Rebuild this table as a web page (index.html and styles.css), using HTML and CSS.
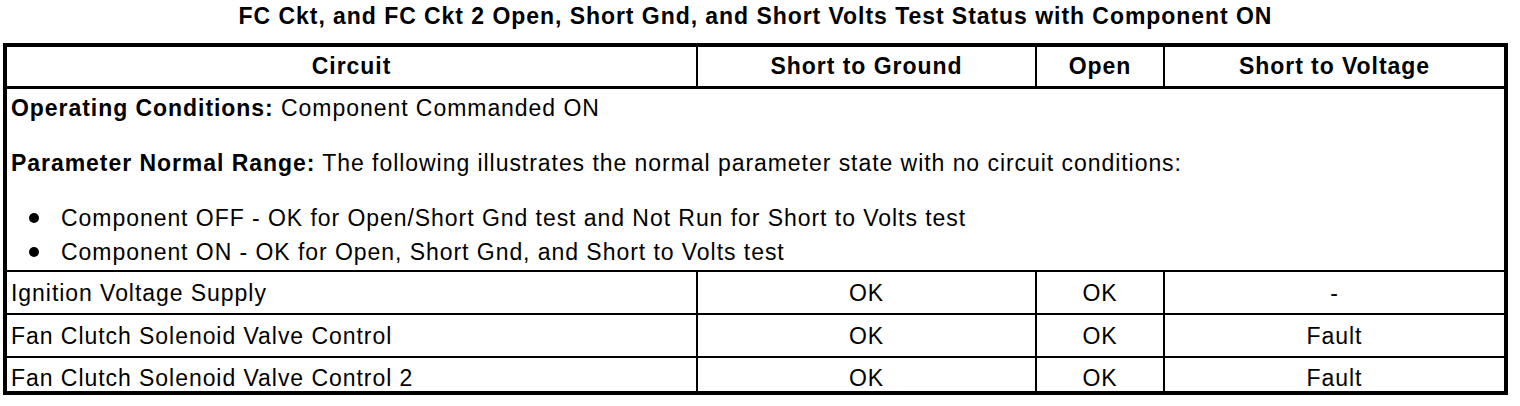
FILE: index.html
```html
<!DOCTYPE html>
<html lang="en">
<head>
<meta charset="utf-8">
<title>FC Ckt Test Status</title>
<link rel="stylesheet" href="styles.css">
</head>
<body>
<h1 class="title">FC Ckt, and FC Ckt 2 Open, Short Gnd, and Short Volts Test Status with Component ON</h1>
<table class="status">
  <colgroup>
    <col class="c-circuit">
    <col class="c-ground">
    <col class="c-open">
    <col class="c-volt">
  </colgroup>
  <thead>
    <tr>
      <th class="h-first">Circuit</th>
      <th>Short to Ground</th>
      <th>Open</th>
      <th class="h-last">Short to Voltage</th>
    </tr>
  </thead>
  <tbody>
    <tr>
      <td class="info" colspan="4">
        <p class="para"><b>Operating Conditions:</b> Component Commanded ON</p>
        <p class="para"><b>Parameter Normal Range:</b> The following illustrates the normal parameter state with no circuit conditions:</p>
        <ul class="bullets">
          <li>Component OFF - OK for Open/Short Gnd test and Not Run for Short to Volts test</li>
          <li>Component ON - OK for Open, Short Gnd, and Short to Volts test</li>
        </ul>
      </td>
    </tr>
    <tr class="row">
      <td class="name">Ignition Voltage Supply</td>
      <td class="val">OK</td>
      <td class="val">OK</td>
      <td class="val last">-</td>
    </tr>
    <tr class="row">
      <td class="name">Fan Clutch Solenoid Valve Control</td>
      <td class="val">OK</td>
      <td class="val">OK</td>
      <td class="val last">Fault</td>
    </tr>
    <tr class="row row-end">
      <td class="name">Fan Clutch Solenoid Valve Control 2</td>
      <td class="val">OK</td>
      <td class="val">OK</td>
      <td class="val last">Fault</td>
    </tr>
  </tbody>
</table>
</body>
</html>
```
FILE: styles.css
```css
html, body {
  margin: 0;
  padding: 0;
  background: #ffffff;
}

body {
  font-family: "Liberation Sans", Arial, Helvetica, sans-serif;
  font-size: 23px;
  letter-spacing: 0.95px;
  color: #000000;
}

.title {
  margin: 0;
  padding: 0 0 11px 0;
  font-size: 23px;
  font-weight: bold;
  line-height: 32px;
  text-align: center;
  width: 1511px;
}

.status {
  margin-left: 3px;
  width: 1505px;
  table-layout: fixed;
  border-collapse: separate;
  border-spacing: 0;
  border: 4px solid #000000;
}

.c-circuit { width: 691px; }
.c-ground { width: 339px; }
.c-open { width: 128px; }
.c-volt { width: 339px; }

.status th {
  padding: 0;
  line-height: 39px;
  font-weight: bold;
  text-align: center;
  border-bottom: 3px solid #000000;
  border-right: 2px solid #000000;
}

.status th.h-first {
  border-right-width: 2px;
}

.status th.h-last {
  border-right: none;
}

.info {
  padding: 2px 4px 1px 4px;
  border-bottom: 2px solid #000000;
  text-align: left;
}

.para {
  margin: 0 0 21px 0;
  line-height: 34px;
}

.bullets {
  list-style: none;
  margin: 0;
  padding: 0;
}

.bullets li {
  display: flex;
  align-items: center;
  gap: 22px;
  line-height: 34px;
}

.bullets li::before {
  content: "";
  flex: none;
  width: 10px;
  height: 10px;
  margin-left: 18px;
  border-radius: 50%;
  background: #000000;
}

.row td {
  padding: 8px 0 7px 0;
  line-height: 26px;
  vertical-align: top;
  border-bottom: 2px solid #000000;
  border-right: 2px solid #000000;
}

.row td.name {
  padding-left: 4px;
  text-align: left;
}

.row td.val {
  text-align: center;
}

.row td.last {
  border-right: none;
}

.row-end td {
  padding-top: 7px;
  padding-bottom: 0;
  border-bottom: none;
}
```
